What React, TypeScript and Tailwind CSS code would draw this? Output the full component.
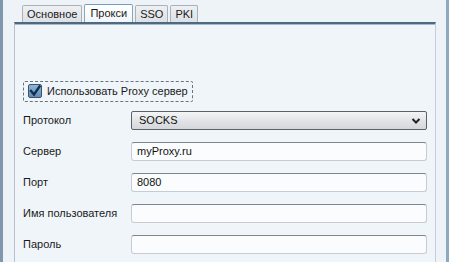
import React from 'react';

const tabs = ['Основное', 'Прокси', 'SSO', 'PKI'];

const fields = [
  { label: 'Сервер', value: 'myProxy.ru' },
  { label: 'Порт', value: '8080' },
  { label: 'Имя пользователя', value: '' },
  { label: 'Пароль', value: '' },
];

function TextBox({ value }: { value: string }) {
  return (
    <div className="flex-1 h-[19px] rounded-[3px] border border-[#c8ccd2] border-t-[#80868c] bg-[#fafcfe] pl-[5px] flex items-center text-[11px] text-[#111]">
      {value}
    </div>
  );
}

export default function App() {
  return (
    <div
      className="w-[449px] h-[262px] flex bg-[#eef3f8] overflow-hidden"
      style={{ fontFamily: '"Liberation Sans", Arial, sans-serif' }}
    >
      <div className="w-[3px] bg-[#7f98ac]" />
      <div className="flex-1 flex flex-col pl-[11px] pr-[10px]">
        {/* Tabs */}
        <div className="flex items-end gap-[2px] pl-[8px] pt-[4px] h-[22px]">
          {tabs.map((t) => {
            const active = t === 'Прокси';
            return (
              <div
                key={t}
                className={
                  active
                    ? 'h-[18px] px-[5px] flex items-center text-[11px] text-[#1a1a1a] rounded-t-[2px] border border-b-0 border-[#8fa4b6] border-t-[#6e9cc4] bg-gradient-to-b from-[#ffffff] to-[#f2f6fa]'
                    : 'h-[17px] px-[4px] flex items-center text-[11px] text-[#1a1a1a] rounded-t-[2px] border border-b-0 border-[#a9b1b9] bg-gradient-to-b from-[#eef0f2] to-[#dde1e5]'
                }
              >
                {t}
              </div>
            );
          })}
        </div>
        {/* Panel */}
        <div className="flex-1 border-t-2 border-[#4c6a82] border-l border-l-[#b8c2cc] border-r border-r-[#c6cede] bg-[#f0f5f9]">
          <div className="h-px bg-[#a8b8c8]" />
          <div className="pl-[8px] pr-[8px] pt-[55px]">
            <div className="inline-flex items-center h-[21px] pl-[4px] pr-[4px] border border-dashed border-[#6a7480] rounded-[2px]">
              <div className="w-[14px] h-[14px] rounded-[2px] border border-[#3c5268] bg-gradient-to-b from-[#8fb6d8] to-[#5f8db6] flex items-center justify-center">
                <svg width="12" height="12" viewBox="0 0 12 12">
                  <path d="M2 6 L5 9.5 L10.5 1.5" stroke="#14304f" strokeWidth="2.4" fill="none" strokeLinecap="square" />
                </svg>
              </div>
              <span className="ml-[5px] text-[11px] text-[#1a1a1a]">Использовать Proxy сервер</span>
            </div>

            <div className="mt-[7px] flex items-center h-[19px]">
              <div className="w-[108px] text-[11px] text-[#1a1a1a]">Протокол</div>
              <div className="flex-1 h-[19px] rounded-[2px] border border-[#5c6268] bg-gradient-to-b from-[#f4f5f6] via-[#e2e4e7] to-[#d4d7db] flex items-center pl-[7px] pr-[5px] text-[11px] text-[#111]">
                <span className="flex-1">SOCKS</span>
                <svg width="10" height="8" viewBox="0 0 10 8">
                  <path d="M1.5 2 L5 5.5 L8.5 2" stroke="#222" strokeWidth="2" fill="none" />
                </svg>
              </div>
            </div>

            {fields.map((f) => (
              <div key={f.label} className="mt-[12px] flex items-center h-[19px]">
                <div className="w-[108px] text-[11px] text-[#1a1a1a]">{f.label}</div>
                <TextBox value={f.value} />
              </div>
            ))}
          </div>
        </div>
      </div>
      <div className="w-[3px] bg-[#8eaabe]" />
    </div>
  );
}
